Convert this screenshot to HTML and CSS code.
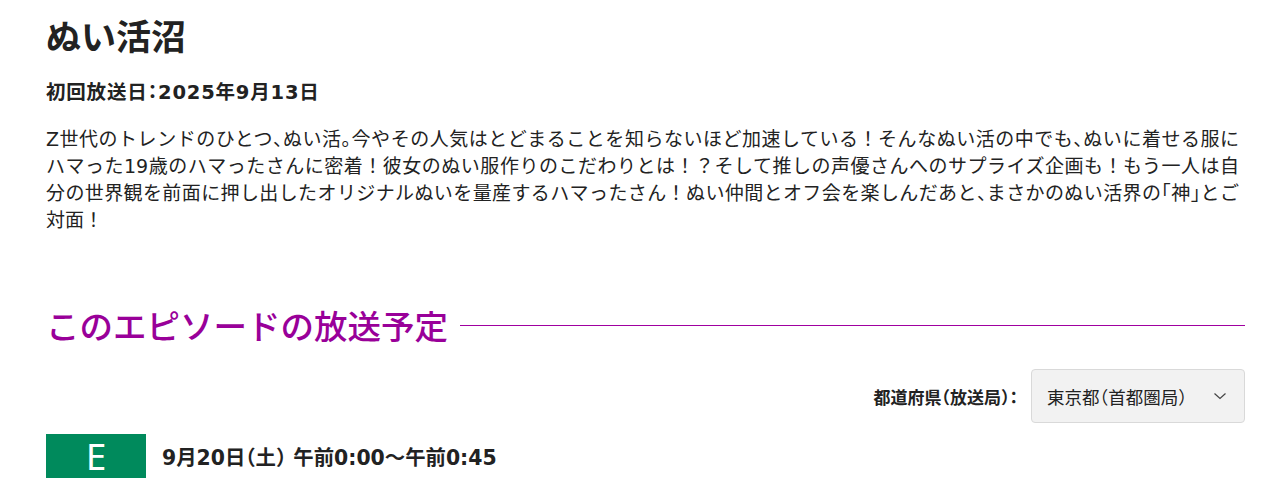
FILE: index.html
```html
<!DOCTYPE html>
<html lang="ja">
<head>
<meta charset="utf-8">
<link rel="stylesheet" href="styles.css">
</head>
<body>
<main class="page">
  <h1 class="title">ぬい活沼</h1>
  <p class="date">初回放送日<span class="hw">：</span>2025年9月13日</p>
  <p class="desc"><span class="line">Z世代のトレンドのひとつ<span class="hw">、</span>ぬい活<span class="hw">。</span>今やその人気はとどまることを知らないほど加速している！そんなぬい活の中でも<span class="hw">、</span>ぬいに着せる服に</span><span class="line">ハマった19歳のハマったさんに密着！彼女のぬい服作りのこだわりとは！？そして推しの声優さんへのサプライズ企画も！もう一人は自</span><span class="line">分の世界観を前面に押し出したオリジナルぬいを量産するハマったさん！ぬい仲間とオフ会を楽しんだあと<span class="hw">、</span>まさかのぬい活界の<span class="hw">「</span>神<span class="hw">」</span>とご</span><span class="line line-last">対面！</span></p>
  <h2 class="section"><span class="section-text">このエピソードの放送予定</span><span class="section-line"></span></h2>
  <div class="region">
    <span class="region-label">都道府県<span class="hw">（</span>放送局<span class="hw">）：</span></span>
    <div class="select">
      <span class="select-text">東京都<span class="hw">（</span>首都圏局<span class="hw">）</span></span>
      <svg class="chev" width="14" height="8" viewBox="0 0 14 8"><path d="M1.5 1.5 L7 6.5 L12.5 1.5" fill="none" stroke="#444" stroke-width="1.2"/></svg>
    </div>
  </div>
  <div class="slot">
    <span class="badge">E</span>
    <span class="slot-time">9月20日<span class="hw">（</span>土<span class="hw">）</span> 午前0:00～午前0:45</span>
  </div>
</main>
</body>
</html>
```
FILE: styles.css
```css
html, body { margin: 0; padding: 0; background: #fff; }
body {
  font-family: "DejaVu Sans", "Noto Sans CJK JP", sans-serif;
  color: #222;
}
.hw { font-feature-settings: "halt"; }
.page { padding: 12px 17px 0 46px; }
.title {
  margin: 0;
  font-size: 35px;
  font-weight: 700;
  line-height: 52px;
  color: #222;
}
.date {
  margin: 15px 0 0;
  font-size: 19.5px;
  letter-spacing: 0.8px;
  font-weight: 700;
  line-height: 28px;
}
.desc {
  margin: 19px 6px 0 0;
  font-size: 19px;
  line-height: 27px;
}
.line {
  display: block;
  text-align: justify;
  text-align-last: justify;
}
.line-last { text-align-last: auto; }
.section {
  display: flex;
  align-items: flex-start;
  gap: 12px;
  margin: 67px 0 0;
  font-size: 33.5px;
  font-weight: 500;
  color: #990099;
  line-height: 48px;
}
.section-text { font-family: "Noto Sans CJK JP", sans-serif; }
.section-line {
  flex: 1;
  height: 0;
  margin-top: 24px;
  border-top: 1px solid #a000a0;
}
.region {
  display: flex;
  justify-content: flex-end;
  align-items: center;
  gap: 13px;
  margin-top: 20px;
}
.region-label { font-size: 17px; font-weight: 700; }
.select {
  box-sizing: border-box;
  width: 214px;
  height: 54px;
  border: 1px solid #d9d9d9;
  border-radius: 4px;
  background: #f2f2f2;
  display: flex;
  align-items: center;
  justify-content: space-between;
  padding: 0 17px 0 15px;
}
.select-text { font-size: 17.5px; }
.chev { display: block; }
.slot {
  display: flex;
  align-items: center;
  gap: 16px;
  margin-top: 11px;
}
.badge {
  width: 100px;
  height: 44px;
  background: #008a5c;
  color: #fff;
  font-family: "Noto Sans", sans-serif;
  font-size: 37px;
  line-height: 44px;
  text-align: center;
}
.slot-time { font-size: 20.4px; font-weight: 700; }
```
